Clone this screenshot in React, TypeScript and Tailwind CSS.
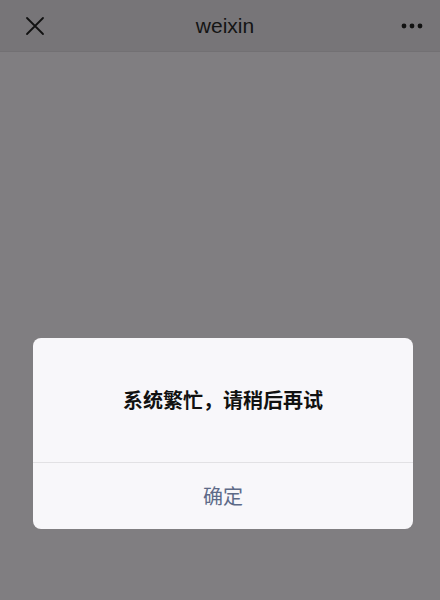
export default function App() {
  return (
    <div
      className="flex h-[600px] w-[440px] flex-col overflow-hidden bg-[#807e81]"
      style={{ fontFamily: '"Liberation Sans", "Noto Sans CJK SC", sans-serif' }}
    >
      {/* Top bar */}
      <header className="flex h-[52px] flex-none items-center justify-between border-b border-[#727073] bg-[#777578] px-[24px]">
        <svg width="20" height="20" viewBox="0 0 20 20" className="ml-px">
          <path d="M2 2 L18 18 M18 2 L2 18" stroke="#111" strokeWidth="1.8" strokeLinecap="round" />
        </svg>
        <span className="ml-[4px] text-[21px] text-[#141414]">weixin</span>
        <svg width="22" height="6" viewBox="0 0 22 6" className="mr-[-7px]">
          <circle cx="3" cy="3" r="2.4" fill="#111" />
          <circle cx="11" cy="3" r="2.4" fill="#111" />
          <circle cx="19" cy="3" r="2.4" fill="#111" />
        </svg>
      </header>

      {/* Page body with dialog */}
      <main className="flex-1 pt-[286px]">
        <div className="ml-[33px] w-[380px] overflow-hidden rounded-[8px] bg-[#f8f7fa]">
          <div className="flex h-[124px] items-center justify-center pt-[1px]">
            <p className="text-[20px] font-semibold text-[#111]">系统繁忙，请稍后再试</p>
          </div>
          <div className="h-px bg-[#e2e1e4]" />
          <div className="flex h-[66px] items-center justify-center pt-[2px]">
            <span className="text-[20px] text-[#5d6a88]">确定</span>
          </div>
        </div>
      </main>
    </div>
  );
}
